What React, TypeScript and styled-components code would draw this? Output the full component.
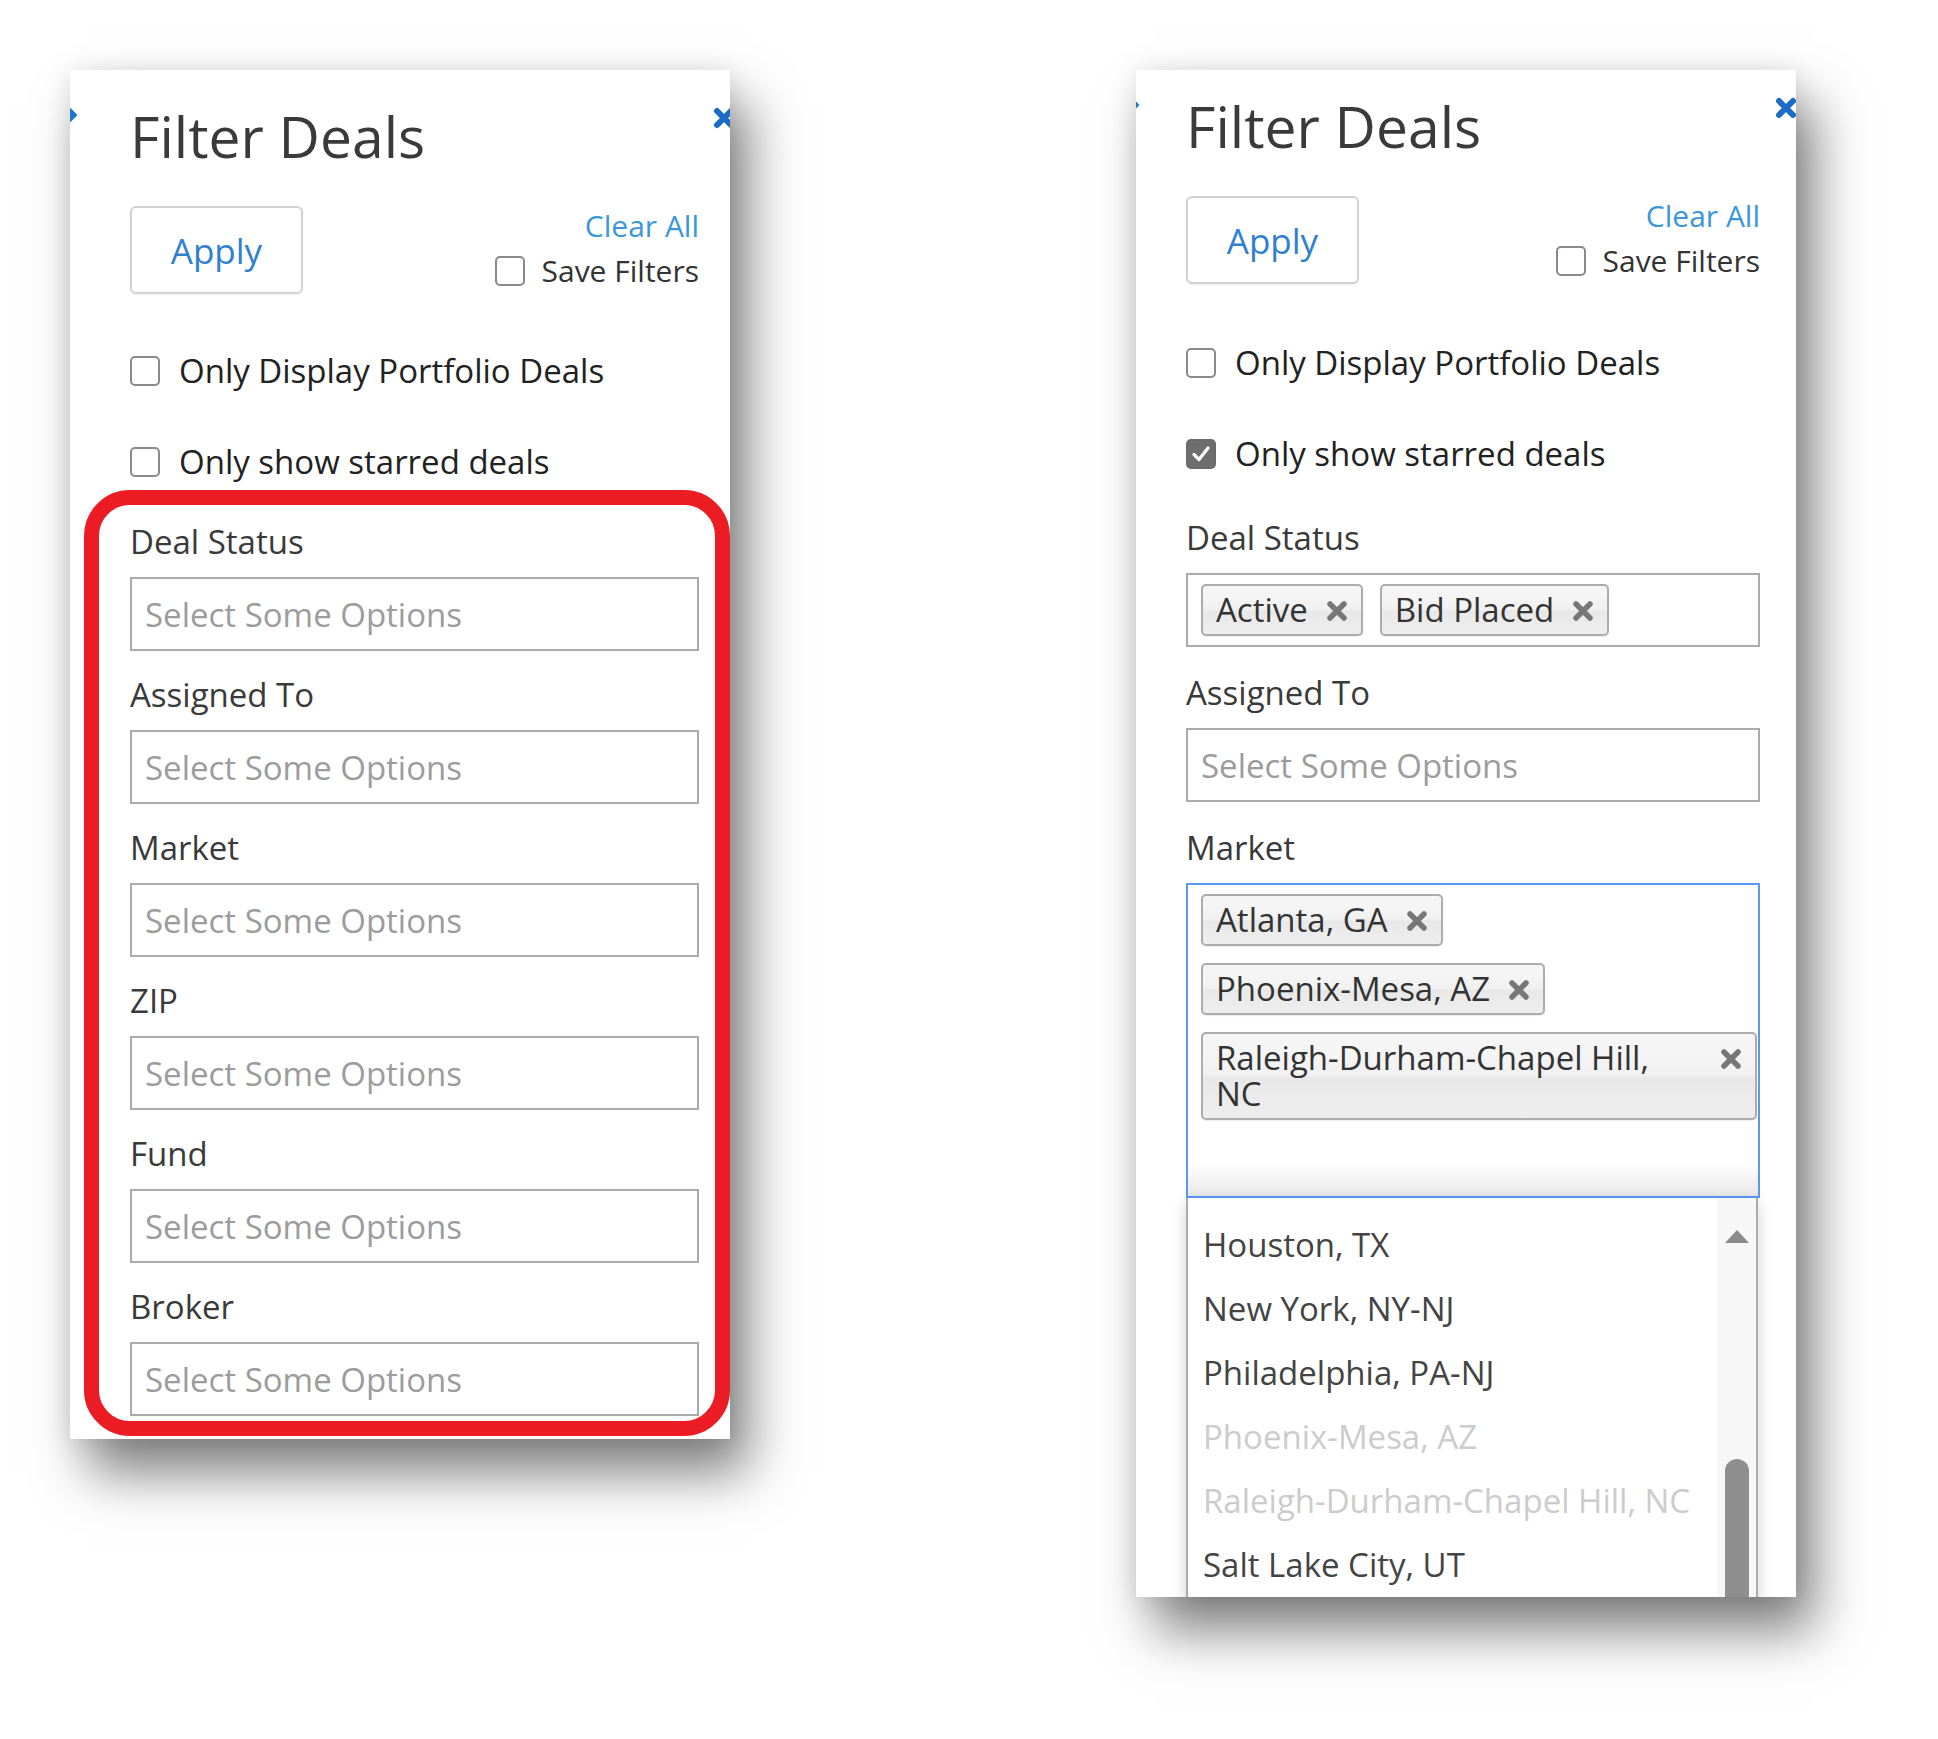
import React from "react";
import styled, { createGlobalStyle } from "styled-components";

const Global = createGlobalStyle`
  html, body { margin: 0; padding: 0; background: #fff; }
  body { font-family: "Open Sans", "Noto Sans", sans-serif; color: #333; }
  * { box-sizing: border-box; }
`;

const Page = styled.div`
  display: flex;
  align-items: flex-start;
  gap: 406px;
  padding: 70px 0 0 70px;
  min-height: 1739px;
`;

const Panel = styled.section<{ $height: number; $padTop: number; $padLeft: number; $padRight: number }>`
  position: relative;
  flex: none;
  width: 660px;
  height: ${(p) => p.$height}px;
  overflow: hidden;
  background: #fff;
  padding: ${(p) => p.$padTop}px ${(p) => p.$padRight}px 0 ${(p) => p.$padLeft}px;
  box-shadow: 18px 34px 50px rgba(0, 0, 0, 0.5), 0 0 24px rgba(0, 0, 0, 0.1);
  display: flex;
  flex-direction: column;
`;

const EdgeMark = styled.svg<{ $top: number; $left: number }>`
  position: absolute;
  top: ${(p) => p.$top}px;
  left: ${(p) => p.$left}px;
`;

const CloseButton = styled.button<{ $top: number; $right: number }>`
  position: absolute;
  top: ${(p) => p.$top}px;
  right: ${(p) => p.$right}px;
  width: 24px;
  height: 24px;
  padding: 0;
  border: 0;
  background: none;
  display: flex;
`;

const Title = styled.h1`
  margin: 0;
  font-size: 57px;
  line-height: 68px;
  font-weight: 400;
  color: #3a3a3a;
`;

const ActionRow = styled.div`
  display: flex;
  justify-content: space-between;
  align-items: flex-start;
  margin-top: 36px;
`;

const ApplyButton = styled.button`
  width: 173px;
  height: 88px;
  border: 2px solid #d2d2d2;
  border-radius: 6px;
  background: #fff;
  font-family: inherit;
  font-size: 35px;
  color: #2f80d1;
  padding: 0;
  box-shadow: 0 1px 2px rgba(0, 0, 0, 0.06);
`;

const SideActions = styled.div`
  display: flex;
  flex-direction: column;
  align-items: flex-end;
  padding-top: 2px;
  gap: 9px;
`;

const ClearLink = styled.a`
  font-size: 30px;
  line-height: 36px;
  color: #3b96dc;
  text-decoration: none;
`;

const SaveRow = styled.label`
  display: flex;
  align-items: center;
  gap: 17px;
  font-size: 30px;
  line-height: 36px;
  color: #333;
`;

const Box = styled.span<{ $checked?: boolean }>`
  flex: none;
  width: 30px;
  height: 30px;
  border: 2px solid ${(p) => (p.$checked ? "#6a6a6a" : "#8a8a8a")};
  border-radius: 5px;
  background: ${(p) => (p.$checked ? "#6e6e6e" : "#fff")};
  display: inline-flex;
  align-items: center;
  justify-content: center;
`;

const OptionRow = styled.label<{ $top: number }>`
  display: flex;
  align-items: center;
  gap: 19px;
  margin-top: ${(p) => p.$top}px;
  font-size: 33px;
  line-height: 40px;
  color: #222;
`;

const Fields = styled.div<{ $top: number; $gap: number }>`
  display: flex;
  flex-direction: column;
  gap: ${(p) => p.$gap}px;
  margin-top: ${(p) => p.$top}px;
`;

const Field = styled.div`
  position: relative;
  display: flex;
  flex-direction: column;
  gap: 15px;
`;

const FieldLabel = styled.div`
  font-size: 33px;
  line-height: 40px;
  color: #3a3a3a;
`;

const ChoiceBox = styled.div<{ $focused?: boolean }>`
  min-height: 74px;
  border: 2px solid ${(p) => (p.$focused ? "#5b97f5" : "#ababab")};
  background: ${(p) =>
    p.$focused ? "linear-gradient(#fff calc(100% - 34px), #e9e9e9)" : "#fff"};
  display: flex;
  flex-wrap: wrap;
  align-items: flex-start;
  gap: 17px;
  padding: 9px 1px 9px 13px;
`;

const Placeholder = styled.span`
  height: 52px;
  padding-top: 2px;
  font-size: 33px;
  line-height: 50px;
  color: #9c9c9c;
`;

const SearchField = styled.span`
  width: 30px;
  height: 50px;
`;

const Chip = styled.span<{ $long?: boolean }>`
  position: relative;
  display: inline-block;
  max-width: 100%;
  border: 2px solid #acacac;
  border-radius: 5px;
  background: linear-gradient(#f5f5f5 20%, #f0f0f0 50%, #e8e8e8 52%, #eeeeee);
  padding: 6px ${(p) => (p.$long ? 80 : 53)}px 6px 13px;
  font-size: 33px;
  line-height: 36px;
  color: #333;
  box-shadow: 0 1px 1px rgba(0, 0, 0, 0.08);
`;

const ChipRemove = styled.span`
  position: absolute;
  right: 12px;
  top: 13px;
  width: 24px;
  height: 24px;
  display: flex;
`;

const Drop = styled.div`
  position: absolute;
  top: 100%;
  left: 0;
  right: 2px;
  height: 440px;
  border: 2px solid #ababab;
  border-top: 0;
  background: #fff;
  box-shadow: 0 4px 14px rgba(0, 0, 0, 0.18);
  display: flex;
`;

const ResultList = styled.ul`
  flex: 1;
  list-style: none;
  margin: 0;
  padding: 15px 0 0 0;
`;

const ResultItem = styled.li<{ $disabled?: boolean }>`
  padding: 14px 15px;
  font-size: 33px;
  line-height: 36px;
  white-space: nowrap;
  color: ${(p) => (p.$disabled ? "#cccccc" : "#444")};
`;

const ScrollTrack = styled.div`
  flex: none;
  width: 39px;
  background: #f7f7f7;
  display: flex;
  flex-direction: column;
  align-items: center;
  padding-top: 32px;
`;

const ScrollArrow = styled.div`
  width: 0;
  height: 0;
  border-left: 12px solid transparent;
  border-right: 12px solid transparent;
  border-bottom: 13px solid #8a8a8a;
`;

const ScrollThumb = styled.div`
  margin-top: 216px;
  width: 24px;
  height: 320px;
  border-radius: 12px;
  background: #8e8e8e;
`;

const Annotation = styled.div`
  position: absolute;
  left: 14px;
  top: 420px;
  right: 0;
  bottom: 3px;
  border: 15px solid #ec1c24;
  border-radius: 46px;
  pointer-events: none;
`;

const XIcon = ({ color, width, size }: { color: string; width: number; size: number }) => (
  <svg width={size} height={size} viewBox="0 0 24 24">
    <path d="M5 5 L19 19 M19 5 L5 19" stroke={color} strokeWidth={width} strokeLinecap="round" fill="none" />
  </svg>
);

const CheckMark = () => (
  <svg width="22" height="22" viewBox="0 0 22 22">
    <path d="M4 11.5 L9 16.5 L18 5" stroke="#fff" strokeWidth="3.2" fill="none" strokeLinecap="round" strokeLinejoin="round" />
  </svg>
);

const Checkbox = ({ checked }: { checked?: boolean }) => (
  <Box $checked={checked}>{checked && <CheckMark />}</Box>
);

type FieldDef = { label: string; values?: string[]; focused?: boolean };

type PanelDef = {
  height: number;
  padTop: number;
  padLeft: number;
  padRight: number;
  closeRight: number;
  edgeLeft: number;
  checksTop: number;
  fieldsTop: number;
  fieldsGap: number;
  starred: boolean;
  annotate: boolean;
  fields: FieldDef[];
};

const results: { name: string; disabled?: boolean }[] = [
  { name: "Houston, TX" },
  { name: "New York, NY-NJ" },
  { name: "Philadelphia, PA-NJ" },
  { name: "Phoenix-Mesa, AZ", disabled: true },
  { name: "Raleigh-Durham-Chapel Hill, NC", disabled: true },
  { name: "Salt Lake City, UT" },
];

const panels: PanelDef[] = [
  {
    height: 1369,
    padTop: 32,
    padLeft: 60,
    padRight: 31,
    closeRight: -6,
    edgeLeft: -7,
    checksTop: 57,
    fieldsTop: 40,
    fieldsGap: 24,
    starred: false,
    annotate: true,
    fields: [
      { label: "Deal Status" },
      { label: "Assigned To" },
      { label: "Market" },
      { label: "ZIP" },
      { label: "Fund" },
      { label: "Broker" },
    ],
  },
  {
    height: 1527,
    padTop: 22,
    padLeft: 50,
    padRight: 36,
    closeRight: -2,
    edgeLeft: -11,
    checksTop: 59,
    fieldsTop: 44,
    fieldsGap: 26,
    starred: true,
    annotate: false,
    fields: [
      { label: "Deal Status", values: ["Active", "Bid Placed"] },
      { label: "Assigned To" },
      {
        label: "Market",
        focused: true,
        values: ["Atlanta, GA", "Phoenix-Mesa, AZ", "Raleigh-Durham-Chapel Hill, NC"],
      },
    ],
  },
];

const FilterField = ({ field }: { field: FieldDef }) => (
  <Field>
    <FieldLabel>{field.label}</FieldLabel>
    <ChoiceBox $focused={field.focused}>
      {field.values && field.values.length > 0 ? (
        <>
          {field.values.map((v) => (
            <Chip key={v} $long={v.length > 24}>
              {v}
              <ChipRemove>
                <XIcon color="#777" width={5.5} size={24} />
              </ChipRemove>
            </Chip>
          ))}
          <SearchField />
        </>
      ) : (
        <Placeholder>Select Some Options</Placeholder>
      )}
    </ChoiceBox>
    {field.focused && (
      <Drop>
        <ResultList>
          {results.map((r) => (
            <ResultItem key={r.name} $disabled={r.disabled}>
              {r.name}
            </ResultItem>
          ))}
        </ResultList>
        <ScrollTrack>
          <ScrollArrow />
          <ScrollThumb />
        </ScrollTrack>
      </Drop>
    )}
  </Field>
);

const FilterPanel = ({ def }: { def: PanelDef }) => (
  <Panel $height={def.height} $padTop={def.padTop} $padLeft={def.padLeft} $padRight={def.padRight}>
    <EdgeMark $top={def.padTop + 1} $left={def.edgeLeft} width="14" height="24" viewBox="0 0 14 24">
      <path d="M2 3 L11 12 L2 21" stroke="#1f74cf" strokeWidth="5" fill="none" />
    </EdgeMark>
    <CloseButton $top={def.padTop + 4} $right={def.closeRight} aria-label="Close">
      <XIcon color="#1b6cc8" width={6} size={24} />
    </CloseButton>
    <Title>Filter Deals</Title>
    <ActionRow>
      <ApplyButton>Apply</ApplyButton>
      <SideActions>
        <ClearLink href="#">Clear All</ClearLink>
        <SaveRow>
          <Checkbox />
          Save Filters
        </SaveRow>
      </SideActions>
    </ActionRow>
    <OptionRow $top={def.checksTop}>
      <Checkbox />
      Only Display Portfolio Deals
    </OptionRow>
    <OptionRow $top={51}>
      <Checkbox checked={def.starred} />
      Only show starred deals
    </OptionRow>
    <Fields $top={def.fieldsTop} $gap={def.fieldsGap}>
      {def.fields.map((f) => (
        <FilterField key={f.label} field={f} />
      ))}
    </Fields>
    {def.annotate && <Annotation />}
  </Panel>
);

export default function App() {
  return (
    <>
      <Global />
      <Page>
        {panels.map((p, i) => (
          <FilterPanel key={i} def={p} />
        ))}
      </Page>
    </>
  );
}
